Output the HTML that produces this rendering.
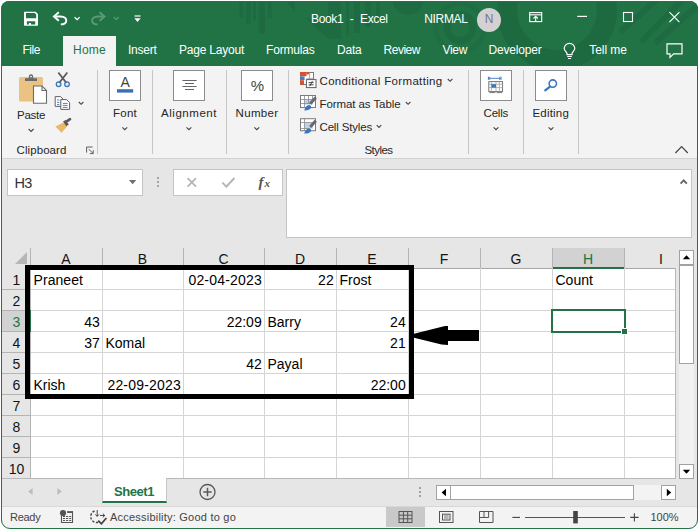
<!DOCTYPE html>
<html><head><meta charset="utf-8"><title>Book1 - Excel</title>
<style>
html,body{margin:0;padding:0;}
body{width:699px;height:531px;overflow:hidden;background:#fff;position:relative;font-family:"Liberation Sans",sans-serif;}
.a{position:absolute;}
.t{position:absolute;white-space:pre;}
svg{position:absolute;overflow:visible;}

</style></head>
<body>
<!-- window backgrounds -->
<div class="a" style="left:1px;top:1px;width:697px;height:527.6px;background:#e6e6e6;border-radius:8px 8px 9px 9px;"></div>
<div class="a" id="titlebar" style="left:1px;top:1px;width:697px;height:65px;background:#217346;border-radius:8px 8px 0 0;overflow:hidden;">
<svg width="697" height="65" viewBox="1 1 697 65" style="left:0;top:0">
 <g fill="#1e6b41">
  <rect x="239.5" y="0" width="3.8" height="18"/><rect x="246" y="0" width="4.5" height="24.5"/><rect x="253" y="0" width="3" height="20.5"/><rect x="258.6" y="0" width="6.4" height="33.5"/><rect x="267.6" y="0" width="3.9" height="18"/>
  <path d="M285.5 0H295V13Z"/>
  <path d="M305 18L328 38.6H341V0H328V20Z"/>
  <rect x="346" y="0" width="3" height="36"/><rect x="354" y="0" width="6" height="33"/><rect x="365" y="0" width="6" height="27"/><rect x="376" y="0" width="4" height="22"/>
  <circle cx="408" cy="0" r="15"/>
 </g>
 <g fill="none" stroke="#1e6b41">
  <circle cx="460" cy="27.5" r="13" stroke-width="7"/>
  <circle cx="460" cy="27.5" r="24" stroke-width="5" stroke="#1f6e43"/>
  <circle cx="557" cy="10" r="50" stroke-width="20" stroke="#1e6a40"/>
 </g>
 <g stroke="#1e6b41" stroke-width="6">
  <line x1="662" y1="-5" x2="620" y2="32"/><line x1="687" y1="-5" x2="641" y2="42"/><line x1="703" y1="1" x2="655" y2="43"/>
 </g>
</svg>
</div>
<div class="a" style="left:63px;top:36px;width:53px;height:31px;background:#f3f3f3;"></div>
<div class="a" style="left:2px;top:66px;width:695px;height:92px;background:#f3f3f3;border-bottom:1px solid #d2d2d2;"></div>
<!-- status bar -->
<div class="a" style="left:2px;top:506px;width:695px;height:22px;background:#f3f3f3;border-radius:0 0 8px 8px;border-top:1px solid #d8d8d8;box-sizing:border-box"></div>

<!-- avatar -->
<div class="a" style="left:477px;top:7.5px;width:24px;height:24px;border-radius:50%;background:#d3d1d1;"></div>

<!-- ribbon separators -->
<div class="a" style="left:97px;top:70px;width:1px;height:84px;background:#c6c6c6"></div>
<div class="a" style="left:152px;top:70px;width:1px;height:84px;background:#c6c6c6"></div>
<div class="a" style="left:226px;top:70px;width:1px;height:84px;background:#c6c6c6"></div>
<div class="a" style="left:288px;top:70px;width:1px;height:84px;background:#c6c6c6"></div>
<div class="a" style="left:468px;top:70px;width:1px;height:84px;background:#c6c6c6"></div>
<div class="a" style="left:523px;top:70px;width:1px;height:84px;background:#c6c6c6"></div>
<div class="a" style="left:578px;top:70px;width:1px;height:84px;background:#c6c6c6"></div>
<!-- ribbon big button boxes -->
<div class="a" style="left:109px;top:70px;width:32px;height:31px;background:#fff;border:1px solid #8c8c8c;box-sizing:border-box"></div>
<div class="a" style="left:173px;top:70px;width:32px;height:31px;background:#fff;border:1px solid #8c8c8c;box-sizing:border-box"></div>
<div class="a" style="left:241px;top:70px;width:32px;height:31px;background:#fff;border:1px solid #8c8c8c;box-sizing:border-box"></div>
<div class="a" style="left:480px;top:70px;width:32px;height:31px;background:#fff;border:1px solid #8c8c8c;box-sizing:border-box"></div>
<div class="a" style="left:535px;top:70px;width:32px;height:31px;background:#fff;border:1px solid #8c8c8c;box-sizing:border-box"></div>

<!-- formula bar -->
<div class="a" style="left:7px;top:169px;width:136px;height:27px;background:#fff;border:1px solid #c4c4c4;box-sizing:border-box"></div>
<div class="a" style="left:173px;top:169px;width:110px;height:27px;background:#fff;border:1px solid #c4c4c4;box-sizing:border-box"></div>
<div class="a" style="left:286px;top:169px;width:406px;height:69px;background:#fff;border:1px solid #c4c4c4;box-sizing:border-box"></div>

<!-- grid -->
<div class="a" id="grid" style="left:31px;top:269px;width:645px;height:209px;background:#fff;"></div>
<!-- H header selected -->
<div class="a" style="left:553px;top:248px;width:72px;height:19px;background:#d2d2d2;"></div>
<div class="a" style="left:552px;top:267px;width:73px;height:2px;background:#217346;"></div>
<!-- row 3 header selected -->
<div class="a" style="left:2px;top:311px;width:28px;height:20px;background:#d2d2d2;"></div>
<div class="a" style="left:30px;top:310px;width:1px;height:22px;background:#217346;z-index:2"></div>
<svg width="699" height="531" style="left:0;top:0" shape-rendering="crispEdges">
 <!-- header separators -->
 <g stroke="#b4b4b4" stroke-width="1">
  <path d="M30.5 248V268 M102.5 248V268 M183.5 248V268 M264.5 248V268 M336.5 248V268 M408.5 248V268 M480.5 248V268 M552.5 248V268 M624.5 248V268"/>
  <path d="M30 268.5H552 M625 268.5H676" stroke="#a8a8a8"/>
  <path d="M2 289.5H30 M2 310.5H30 M2 331.5H30 M2 352.5H30 M2 373.5H30 M2 394.5H30 M2 415.5H30 M2 436.5H30 M2 457.5H30"/>
  <path d="M30.5 269V478"/>
 </g>
 <g stroke="#d4d4d4" stroke-width="1">
  <path d="M102.5 268V478 M183.5 268V478 M264.5 268V478 M336.5 268V478 M408.5 268V478 M480.5 268V478 M552.5 268V478 M624.5 268V478"/>
  <path d="M31 289.5H676 M31 310.5H676 M31 331.5H676 M31 352.5H676 M31 373.5H676 M31 394.5H676 M31 415.5H676 M31 436.5H676 M31 457.5H676"/>
 </g>
 <path d="M2 478.5H676 M675.5 268V478" stroke="#b8b8b8" fill="none"/>
 <!-- select all triangle -->
 <path d="M27 252V264H15Z" fill="#b6b6b6" shape-rendering="auto"/>
</svg>
<!-- black box -->
<div class="a" style="left:25px;top:265px;width:389px;height:134px;border:5px solid #000;box-sizing:border-box;"></div>
<!-- arrow -->
<svg width="80" height="30" style="left:410px;top:320px" viewBox="410 320 80 30">
 <path d="M413 334 L445 326 L448 326 L448 330 L479 330 L479 341 L448 341 L448 345 L441.5 344.6 L413 337.4 Z" fill="#000"/>
</svg>
<!-- selected cell -->
<div class="a" style="left:551px;top:309px;width:75px;height:24px;border:2px solid #217346;box-sizing:border-box;"></div>
<div class="a" style="left:621px;top:328px;width:7px;height:7px;background:#217346;border:1px solid #fff;box-sizing:border-box"></div>

<!-- vertical scrollbar -->
<div class="a" style="left:679px;top:250px;width:15px;height:229px;background:#f1f1f1;"></div>
<div class="a" style="left:679px;top:250px;width:15px;height:15px;background:#fff;border:1px solid #a2a2a2;box-sizing:border-box"></div>
<div class="a" style="left:679px;top:265px;width:15px;height:99px;background:#fff;border:1px solid #a2a2a2;box-sizing:border-box"></div>
<div class="a" style="left:679px;top:464px;width:15px;height:15px;background:#fff;border:1px solid #a2a2a2;box-sizing:border-box"></div>
<!-- horizontal scrollbar -->
<div class="a" style="left:436px;top:485px;width:240px;height:15px;background:#f3f3f3;"></div>
<div class="a" style="left:436px;top:485px;width:15px;height:15px;background:#fff;border:1px solid #a2a2a2;box-sizing:border-box"></div>
<div class="a" style="left:450px;top:485px;width:184px;height:15px;background:#fff;border:1px solid #a2a2a2;box-sizing:border-box"></div>
<div class="a" style="left:661px;top:485px;width:15px;height:15px;background:#fff;border:1px solid #a2a2a2;box-sizing:border-box"></div>
<svg width="699" height="531" style="left:0;top:0">
 <path d="M682.8 259.2h7.4l-3.7-4z M682.8 469.8h7.4l-3.7 4z M446 488.8v7.4l-4.4-3.7z M666.8 488.8v7.4l4.4-3.7z" fill="#000"/>
 <g fill="#a0a0a0"><rect x="419" y="487" width="2" height="2"/><rect x="419" y="491" width="2" height="2"/><rect x="419" y="495" width="2" height="2"/></g>
 <path d="M32.6 488v7l-4.4-3.5z M57.4 488v7l4.4-3.5z" fill="#bcbcbc"/>
 <circle cx="207.5" cy="492" r="7.5" fill="none" stroke="#5a5a5a" stroke-width="1.3"/>
 <path d="M203.3 492h8.4M207.5 487.8v8.4" stroke="#5a5a5a" stroke-width="1.5"/>
</svg>
<!-- sheet tab -->
<div class="a" style="left:102px;top:478px;width:65px;height:25px;background:#fff;border-bottom:2px solid #217346;border-left:1px solid #c6c6c6;border-right:1px solid #c6c6c6;box-sizing:border-box"></div>

<!-- status bar normal view selected -->
<div class="a" style="left:386px;top:507px;width:39px;height:20px;background:#c9c9c9;"></div>

<!-- window frame -->
<div class="a" style="left:1px;top:1px;width:697px;height:527.6px;border:1px solid #217346;border-radius:8px 8px 9px 9px;box-sizing:border-box;"></div>
<svg width="699" height="531" style="left:0;top:0" fill="none">
 <!-- ===== quick access ===== -->
 <path fill-rule="evenodd" fill="#fff" d="M24 12.3Q24 11.7 24.6 11.7H35.6L38 14.1V25.1Q38 25.7 37.4 25.7H24.6Q24 25.7 24 25.1Z M26 13V18.3H36.2V14.6L34.6 13Z M26.9 21.2V24.6H28.9V22.9H30.9V24.6H35.2V21.2Z"/>
 <!-- undo -->
 <g stroke="#fff" stroke-width="1.9" stroke-linejoin="miter">
  <path d="M58.8 12.2L53.9 16.5L58.8 20.8"/>
  <path d="M54.4 16.5H60.5C64.5 16.5 66.5 18.6 66.3 20.8C66 23 63.6 24.4 60.8 24.4"/>
 </g>
 <path d="M74.6 17.2l2.5 2.4L79.6 17.2" stroke="#fff" stroke-width="1.3"/>
 <!-- redo (disabled) -->
 <g stroke="#5c9a78" stroke-width="1.9">
  <path d="M99.6 12.2L104.5 16.5L99.6 20.8"/>
  <path d="M104 16.5H97.9C93.9 16.5 91.9 18.6 92.1 20.8C92.4 23 94.8 24.4 97.6 24.4"/>
 </g>
 <path d="M113.8 17.2l2.4 2.3L118.6 17.2" stroke="#5c9a78" stroke-width="1.2"/>
 <!-- customize QAT -->
 <path d="M134.5 16H140.5" stroke="#fff" stroke-width="1.2"/>
 <path d="M134.3 18.3H140.7L137.5 22Z" fill="#fff"/>
 <!-- ribbon display options -->
 <g stroke="#fff" stroke-width="1.1">
  <rect x="529.7" y="12.6" width="12" height="9"/>
  <path d="M529.7 14.8H541.7"/>
  <path d="M535.7 21.6V16.4M533.5 18.5L535.7 16.2L537.9 18.5"/>
 </g>
 <!-- min / max / close -->
 <path d="M577.2 16.4H587" stroke="#fff" stroke-width="1.2"/>
 <rect x="623.5" y="12.5" width="9" height="9" stroke="#fff" stroke-width="1.1"/>
 <path d="M669.4 12.1L679.4 22.1M679.4 12.1L669.4 22.1" stroke="#fff" stroke-width="1.1"/>
 <!-- lightbulb -->
 <g stroke="#fff" stroke-width="1.2">
  <path d="M567 54.7V53.4C567 52 564.2 50.8 564.2 48.6A5.3 5.3 0 0 1 574.8 48.6C574.8 50.8 572 52 572 53.4V54.7Z"/>
  <path d="M567.2 56.5H571.8M568 58.5H571"/>
 </g>
 <!-- comment -->
 <path d="M667 43.8H682V53.8H673.6L670 57.4V53.8H667Z" stroke="#fff" stroke-width="1.2"/>

 <!-- ===== ribbon icons ===== -->
 <!-- paste -->
 <rect x="19" y="77" width="24" height="24.5" rx="1.5" fill="#eac282"/>
 <path d="M25 81V78.2H28.8V76.4A2.2 2.2 0 0 1 33.2 76.4V78.2H37V81Z" fill="#6b6b6b"/>
 <circle cx="31" cy="76.6" r="0.9" fill="#f3f3f3"/>
 <path d="M33.5 86H42L46.5 90.5V103.3H33.5Z" fill="#fff" stroke="#6b6b6b" stroke-width="1.1"/>
 <path d="M42 86V90.5H46.5" stroke="#6b6b6b" stroke-width="1.1"/>
 <path d="M28.6 129l2.5 2.4 2.5-2.4" stroke="#444" stroke-width="1.1"/>
 <!-- scissors -->
 <path d="M58.3 72.5L66.5 83M67.3 72.5L59.1 83" stroke="#5a5a5a" stroke-width="1.8"/>
 <circle cx="58.6" cy="84.2" r="2.3" stroke="#3c76bd" stroke-width="1.3"/>
 <circle cx="67" cy="84.2" r="2.3" stroke="#3c76bd" stroke-width="1.3"/>
 <!-- copy -->
 <path d="M55.2 96.6H60.6L63.2 99.2V106.4H55.2Z" fill="#fff" stroke="#5f5f5f" stroke-width="1"/>
 <path d="M60.8 99.6H66.6L69.6 102.6V109.4H60.8Z" fill="#fff" stroke="#5f5f5f" stroke-width="1"/>
 <path d="M57 100H59.4M57 102.4H59.4M57 104.6H59.4M62.8 103.4H67.6M62.8 105.4H67.6M62.8 107.4H67.6" stroke="#3c76bd" stroke-width="0.9"/>
 <path d="M78.8 102l2.3 2.3 2.3-2.3" stroke="#444" stroke-width="1.1"/>
 <!-- format painter -->
 <path d="M55.4 126.6L64.2 122.2L67 126.4L61.6 132.8Z" fill="#eab866"/>
 <path d="M63 121.6L65.6 119.9L68.8 124.4L66.3 126.2Z" fill="#5a5a5a"/>
 <path d="M66.4 121.6L70 119.2" stroke="#5a5a5a" stroke-width="2.6" stroke-linecap="round"/>
 <!-- dialog launcher -->
 <path d="M86.6 152.6V147H92.6" stroke="#5f5f5f" stroke-width="1"/>
 <path d="M88.8 149.2L93 153.4M93.2 150.2V153.6H89.8" stroke="#5f5f5f" stroke-width="1"/>
 <!-- font A -->
 <rect x="117" y="89.2" width="16.2" height="3.4" fill="#3d6fb4"/>
 <!-- alignment -->
 <path d="M182.4 80.5H196.6M185 83.5H194M182.4 86.5H196.6M185 89.5H194" stroke="#666" stroke-width="1"/>
 <!-- chevrons -->
 <g stroke="#444" stroke-width="1.1">
  <path d="M122.4 127.4l2.4 2.3 2.4-2.3M186.5 127.4l2.4 2.3 2.4-2.3M254.4 127.4l2.4 2.3 2.4-2.3M493.6 127.4l2.4 2.3 2.4-2.3M548.6 127.4l2.4 2.3 2.4-2.3"/>
  <path d="M447.8 79l2.3 2.3 2.3-2.3M405.8 102l2.3 2.3 2.3-2.3M376.7 125.2l2.3 2.3 2.3-2.3"/>
 </g>
 <!-- conditional formatting -->
 <rect x="300.5" y="72.5" width="13" height="12" fill="#fff" stroke="#7a7a7a" stroke-width="1"/>
 <rect x="300" y="72" width="6.6" height="4.2" fill="#d9502f"/>
 <rect x="306.6" y="72" width="2.6" height="2.4" fill="#d9502f"/>
 <rect x="300" y="76.4" width="4.6" height="3.6" fill="#4a7cc0"/>
 <rect x="300" y="80.2" width="4" height="4.6" fill="#d9502f"/>
 <path d="M309.6 72.5V79M306.6 78.4H313.5" stroke="#9a9a9a" stroke-width="0.8"/>
 <rect x="306.4" y="79.6" width="9.6" height="8" fill="#fff" stroke="#5f5f5f" stroke-width="1"/>
 <path d="M308.6 82.6H313.6M308.6 84.8H313.6M312.4 81.2L309.8 86.2" stroke="#333" stroke-width="0.9"/>
 <!-- format as table -->
 <g id="tblicon">
  <rect x="300.5" y="95.5" width="15" height="12" fill="#fff" stroke="#7a7a7a" stroke-width="1"/>
  <rect x="304.6" y="99.6" width="8" height="5" fill="#bcd3ee"/>
  <path d="M300.5 99.5H315.5M300.5 103.5H312M304.5 95.5V107.5M308.5 95.5V104M312.5 95.5V101" stroke="#8a8a8a" stroke-width="0.8"/>
  <path d="M315.8 97.6L310.2 103.8" stroke="#6a6a6a" stroke-width="3"/>
  <path d="M304.2 110.4C305.2 107.2 307.2 104.6 309.8 105.2C312.4 106 311.6 110.6 304.2 110.4Z" fill="#3c76bd"/>
 </g>
 <!-- cell styles -->
 <g>
  <rect x="300.5" y="118.7" width="15" height="12" fill="#fff" stroke="#7a7a7a" stroke-width="1"/>
  <rect x="304.6" y="122.6" width="8.4" height="6" fill="#bcd3ee"/>
  <path d="M300.5 122.5H315.5M300.5 128.5H309M304.5 118.7V130.7" stroke="#8a8a8a" stroke-width="0.8"/>
  <path d="M315.8 120.8L310.2 127" stroke="#6a6a6a" stroke-width="3"/>
  <path d="M304.2 133.6C305.2 130.4 307.2 127.8 309.8 128.4C312.4 129.2 311.6 133.8 304.2 133.6Z" fill="#3c76bd"/>
 </g>
 <!-- cells -->
 <path d="M488.4 78.3H501M488.4 76.6V80M501 76.6V80M490.2 76.8L488.8 78.3L490.2 79.8M499.2 76.8L500.6 78.3L499.2 79.8" stroke="#3c76bd" stroke-width="0.9"/>
 <rect x="488.8" y="81.6" width="13.8" height="10" fill="#fff" stroke="#6a6a6a" stroke-width="0.9"/>
 <path d="M488.8 84.2H502.6M488.8 87.6H502.6M491.4 81.6V91.6M496 81.6V91.6M499.4 81.6V91.6" stroke="#9a9a9a" stroke-width="0.7"/>
 <rect x="491.4" y="84.2" width="4.6" height="3.4" fill="#3c76bd"/>
 <path d="M489.4 92.6H495.4M496.6 92.6H502" stroke="#6a6a6a" stroke-width="0.9"/>
 <!-- editing magnifier -->
 <circle cx="552.8" cy="83.6" r="3.7" stroke="#3c76bd" stroke-width="1.6"/>
 <path d="M550 86.6L545.2 90.4" stroke="#3c76bd" stroke-width="2.2" stroke-linecap="round"/>
 <!-- collapse ribbon -->
 <path d="M675.4 153L681.6 146.6L687.8 153" stroke="#444" stroke-width="1.2"/>

 <!-- ===== formula bar ===== -->
 <path d="M128.9 180H136.3L132.6 184.2Z" fill="#707070"/>
 <g fill="#a6a6a6"><rect x="157" y="177" width="2" height="2"/><rect x="157" y="181" width="2" height="2"/><rect x="157" y="185" width="2" height="2"/></g>
 <path d="M187.6 178.2L196 186.6M196 178.2L187.6 186.6" stroke="#b4b4b4" stroke-width="1.7"/>
 <path d="M222.4 182.6L226.4 186.6L234.4 178" stroke="#b4b4b4" stroke-width="2"/>
 <path d="M680.6 183.6L683.7 180.4L686.8 183.6" stroke="#666" stroke-width="1.9"/>

 <!-- ===== status bar ===== -->
 <!-- macro record -->
 <circle cx="63" cy="513" r="3.1" fill="#555"/>
 <path d="M67.2 512H73M72.5 511.3V523M73 522.5H61M61.5 523V515.4" stroke="#555" stroke-width="1.1"/>
 <path d="M67.2 512.1H73" stroke="#555" stroke-width="1.7"/>
 <path d="M63 516.5H65M66 516.5H68.2M69.2 516.5H71.2M63 518.5H65M66 518.5H68.2M69.2 518.5H71.2M63 520.5H65M66 520.5H68.2M69.2 520.5H71.2" stroke="#555" stroke-width="1"/>
 <!-- accessibility -->
 <path d="M94.5 511A6 6 0 0 0 98.5 522.3" stroke="#444" stroke-width="1.4" stroke-dasharray="2.3 1.5"/>
 <path d="M97.2 510V516.2M95.4 514.4L97.2 516.4L99 514.4M100 515.5H104.6M102.8 513.6L104.8 515.5L102.8 517.4" stroke="#444" stroke-width="1"/>
 <path d="M98.2 520.6L101.4 523.8L106.4 518" stroke="#444" stroke-width="1.8"/>
 <!-- view buttons -->
 <g stroke="#555" stroke-width="1">
  <rect x="399" y="511.5" width="13" height="11"/>
  <path d="M399 515.2H412M399 518.8H412M403.4 511.5V522.5M407.7 511.5V522.5"/>
  <rect x="439.5" y="511.5" width="13.5" height="11"/>
  <rect x="442.5" y="514.2" width="7.5" height="5.8"/>
  <path d="M444 516H448.6M444 518H448.6" stroke-width="0.8"/>
  <path d="M479.5 522.5V511.5H493V522.5Z"/>
  <path d="M484 511.5V517.5H488.6V511.5M479.5 517.5H484"/>
 </g>
 <!-- zoom -->
 <path d="M512.4 517.4H520" stroke="#444" stroke-width="1.1"/>
 <path d="M525 517.5H625" stroke="#555" stroke-width="1"/>
 <rect x="573.2" y="511" width="4.6" height="12.4" fill="#444"/>
 <path d="M630.2 517.4H638.6M634.4 513.2V521.6" stroke="#444" stroke-width="1.1"/>
</svg>

<div class="t" style="top:11.0px;font-size:12px;line-height:17px;color:#fff;letter-spacing:-0.357px;word-spacing:3.6px;left:311.0px;">Book1 - Excel</div>
<div class="t" style="top:11.0px;font-size:12px;line-height:17px;color:#fff;letter-spacing:-0.357px;left:424.3px;">NIRMAL</div>
<div class="t" style="top:11.0px;font-size:12px;line-height:17px;color:#74748a;left:484.8px;">N</div>
<div class="t" style="top:42.0px;font-size:12px;line-height:17px;color:#fff;letter-spacing:-0.461px;left:22.5px;">File</div>
<div class="t" style="top:42.0px;font-size:12px;line-height:17px;color:#217346;letter-spacing:0.246px;left:73.0px;">Home</div>
<div class="t" style="top:42.0px;font-size:12px;line-height:17px;color:#fff;letter-spacing:-0.253px;left:128.0px;">Insert</div>
<div class="t" style="top:42.0px;font-size:12px;line-height:17px;color:#fff;letter-spacing:-0.217px;left:179.0px;">Page Layout</div>
<div class="t" style="top:42.0px;font-size:12px;line-height:17px;color:#fff;letter-spacing:-0.189px;left:266.0px;">Formulas</div>
<div class="t" style="top:42.0px;font-size:12px;line-height:17px;color:#fff;letter-spacing:-0.215px;left:337.0px;">Data</div>
<div class="t" style="top:42.0px;font-size:12px;line-height:17px;color:#fff;letter-spacing:-0.477px;left:383.5px;">Review</div>
<div class="t" style="top:42.0px;font-size:12px;line-height:17px;color:#fff;letter-spacing:-0.324px;left:442.5px;">View</div>
<div class="t" style="top:42.0px;font-size:12px;line-height:17px;color:#fff;letter-spacing:-0.189px;left:488.5px;">Developer</div>
<div class="t" style="top:42.0px;font-size:12px;line-height:17px;color:#fff;letter-spacing:-0.074px;left:589.3px;">Tell me</div>
<div class="t" style="top:106.5px;font-size:11.5px;line-height:16px;color:#262626;letter-spacing:-0.284px;left:17.0px;">Paste</div>
<div class="t" style="top:141.5px;font-size:11.5px;line-height:16px;color:#262626;letter-spacing:0.085px;left:16.5px;">Clipboard</div>
<div class="t" style="top:105.0px;font-size:11.5px;line-height:16px;color:#262626;letter-spacing:0.246px;left:113.0px;">Font</div>
<div class="t" style="top:105.0px;font-size:11.5px;line-height:16px;color:#262626;letter-spacing:0.540px;left:161.0px;">Alignment</div>
<div class="t" style="top:105.0px;font-size:11.5px;line-height:16px;color:#262626;letter-spacing:0.349px;left:235.5px;">Number</div>
<div class="t" style="top:72.5px;font-size:11.5px;line-height:16px;color:#262626;letter-spacing:0.332px;left:319.5px;">Conditional Formatting</div>
<div class="t" style="top:95.5px;font-size:11.5px;line-height:16px;color:#262626;letter-spacing:-0.083px;left:319.5px;">Format as Table</div>
<div class="t" style="top:118.5px;font-size:11.5px;line-height:16px;color:#262626;letter-spacing:-0.166px;left:319.5px;">Cell Styles</div>
<div class="t" style="top:142.0px;font-size:11.5px;line-height:16px;color:#262626;letter-spacing:-0.555px;left:364.5px;">Styles</div>
<div class="t" style="top:105.0px;font-size:11.5px;line-height:16px;color:#262626;letter-spacing:-0.212px;left:483.6px;">Cells</div>
<div class="t" style="top:105.0px;font-size:11.5px;line-height:16px;color:#262626;letter-spacing:0.190px;left:532.5px;">Editing</div>
<div class="t" style="top:71.8px;font-size:14px;line-height:20px;color:#444;left:25.2px;width:200px;text-align:center;">A</div>
<div class="t" style="top:75.1px;font-size:15px;line-height:21px;color:#444;left:157.4px;width:200px;text-align:center;">%</div>
<div class="t" style="top:172.7px;font-size:14.5px;line-height:20px;color:#333;letter-spacing:-0.573px;left:14.4px;">H3</div>
<div class="t" style="top:171.5px;font-size:15px;line-height:21px;color:#555;font-weight:700;font-style:italic;font-family:'Liberation Serif', serif;left:258.6px;">f</div>
<div class="t" style="top:176.1px;font-size:11px;line-height:15px;color:#555;font-weight:700;font-style:italic;font-family:'Liberation Serif', serif;left:264.6px;">x</div>
<div class="t" style="top:248.5px;font-size:14px;line-height:20px;color:#141414;left:-34.0px;width:200px;text-align:center;">A</div>
<div class="t" style="top:248.5px;font-size:14px;line-height:20px;color:#141414;left:42.5px;width:200px;text-align:center;">B</div>
<div class="t" style="top:248.5px;font-size:14px;line-height:20px;color:#141414;left:123.5px;width:200px;text-align:center;">C</div>
<div class="t" style="top:248.5px;font-size:14px;line-height:20px;color:#141414;left:200.0px;width:200px;text-align:center;">D</div>
<div class="t" style="top:248.5px;font-size:14px;line-height:20px;color:#141414;left:272.0px;width:200px;text-align:center;">E</div>
<div class="t" style="top:248.5px;font-size:14px;line-height:20px;color:#141414;left:344.0px;width:200px;text-align:center;">F</div>
<div class="t" style="top:248.5px;font-size:14px;line-height:20px;color:#141414;left:416.0px;width:200px;text-align:center;">G</div>
<div class="t" style="top:248.5px;font-size:14px;line-height:20px;color:#217346;left:488.0px;width:200px;text-align:center;">H</div>
<div class="t" style="top:248.5px;font-size:14px;line-height:20px;color:#141414;left:561.0px;width:200px;text-align:center;">I</div>
<div class="t" style="top:270.0px;font-size:14px;line-height:20px;color:#141414;left:-83.5px;width:200px;text-align:center;">1</div>
<div class="t" style="top:291.0px;font-size:14px;line-height:20px;color:#141414;left:-83.5px;width:200px;text-align:center;">2</div>
<div class="t" style="top:312.0px;font-size:14px;line-height:20px;color:#217346;left:-83.5px;width:200px;text-align:center;">3</div>
<div class="t" style="top:333.0px;font-size:14px;line-height:20px;color:#141414;left:-83.5px;width:200px;text-align:center;">4</div>
<div class="t" style="top:354.0px;font-size:14px;line-height:20px;color:#141414;left:-83.5px;width:200px;text-align:center;">5</div>
<div class="t" style="top:375.0px;font-size:14px;line-height:20px;color:#141414;left:-83.5px;width:200px;text-align:center;">6</div>
<div class="t" style="top:396.0px;font-size:14px;line-height:20px;color:#141414;left:-83.5px;width:200px;text-align:center;">7</div>
<div class="t" style="top:417.0px;font-size:14px;line-height:20px;color:#141414;left:-83.5px;width:200px;text-align:center;">8</div>
<div class="t" style="top:438.0px;font-size:14px;line-height:20px;color:#141414;left:-83.5px;width:200px;text-align:center;">9</div>
<div class="t" style="top:459.0px;font-size:14px;line-height:20px;color:#141414;left:-83.5px;width:200px;text-align:center;">10</div>
<div class="t" style="top:270.0px;font-size:14px;line-height:20px;color:#000;letter-spacing:0.065px;left:33.5px;">Praneet</div>
<div class="t" style="top:270.0px;font-size:14px;line-height:20px;color:#000;letter-spacing:0.188px;left:-38.1px;width:300px;text-align:right;">02-04-2023</div>
<div class="t" style="top:270.0px;font-size:14px;line-height:20px;color:#000;left:33.7px;width:300px;text-align:right;">22</div>
<div class="t" style="top:270.0px;font-size:14px;line-height:20px;color:#000;left:339.5px;">Frost</div>
<div class="t" style="top:270.0px;font-size:14px;line-height:20px;color:#000;left:555.5px;">Count</div>
<div class="t" style="top:312.0px;font-size:14px;line-height:20px;color:#000;left:-200.3px;width:300px;text-align:right;">43</div>
<div class="t" style="top:312.0px;font-size:14px;line-height:20px;color:#000;left:-38.3px;width:300px;text-align:right;">22:09</div>
<div class="t" style="top:312.0px;font-size:14px;line-height:20px;color:#000;left:267.5px;">Barry</div>
<div class="t" style="top:312.0px;font-size:14px;line-height:20px;color:#000;left:105.7px;width:300px;text-align:right;">24</div>
<div class="t" style="top:333.0px;font-size:14px;line-height:20px;color:#000;left:-200.3px;width:300px;text-align:right;">37</div>
<div class="t" style="top:333.0px;font-size:14px;line-height:20px;color:#000;left:105.5px;">Komal</div>
<div class="t" style="top:333.0px;font-size:14px;line-height:20px;color:#000;left:105.7px;width:300px;text-align:right;">21</div>
<div class="t" style="top:354.0px;font-size:14px;line-height:20px;color:#000;left:-38.3px;width:300px;text-align:right;">42</div>
<div class="t" style="top:354.0px;font-size:14px;line-height:20px;color:#000;left:267.5px;">Payal</div>
<div class="t" style="top:375.0px;font-size:14px;line-height:20px;color:#000;left:33.5px;">Krish</div>
<div class="t" style="top:375.0px;font-size:14px;line-height:20px;color:#000;letter-spacing:0.188px;left:-119.1px;width:300px;text-align:right;">22-09-2023</div>
<div class="t" style="top:375.0px;font-size:14px;line-height:20px;color:#000;left:105.7px;width:300px;text-align:right;">22:00</div>
<div class="t" style="top:482.5px;font-size:13px;line-height:18px;color:#217346;font-weight:700;letter-spacing:-0.440px;left:114.0px;">Sheet1</div>
<div class="t" style="top:509.5px;font-size:11px;line-height:15px;color:#444;letter-spacing:-0.279px;left:10.0px;">Ready</div>
<div class="t" style="top:509.5px;font-size:11px;line-height:15px;color:#444;letter-spacing:0.222px;left:110.0px;">Accessibility: Good to go</div>
<div class="t" style="top:509.5px;font-size:11px;line-height:15px;color:#444;letter-spacing:-0.035px;left:650.5px;">100%</div>
</body></html>
